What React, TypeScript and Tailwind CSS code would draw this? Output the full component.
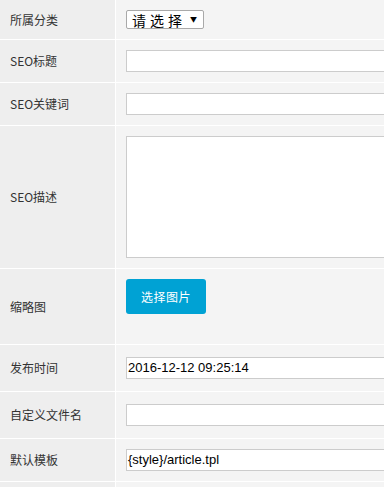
import React from "react";

const font = { fontFamily: '"Noto Sans CJK SC", "Noto Sans", sans-serif' };

function Row({
  label,
  h,
  children,
}: {
  label: string;
  h: string;
  children?: React.ReactNode;
}) {
  return (
    <div className={`flex border-b border-white ${h}`}>
      <div className="w-[116px] shrink-0 bg-[#eeeeee] border-r border-white flex items-center pl-[10px] text-[12px] text-[#333333]">
        {label}
      </div>
      <div className="flex-1 bg-[#f4f4f4] pl-[10px] flex items-center overflow-hidden">
        {children}
      </div>
    </div>
  );
}

function TextInput({ value }: { value?: string }) {
  return (
    <div
      className="h-[22px] w-[300px] shrink-0 bg-white border border-[#cccccc] pl-[1px] flex items-center text-[13px] text-black"
      style={{ fontFamily: '"Liberation Sans", Arial, sans-serif' }}
    >
      {value}
    </div>
  );
}

export default function App() {
  return (
    <div className="w-[384px] h-[487px] overflow-hidden bg-[#f4f4f4]" style={font}>
      <Row label="所属分类" h="h-[40px]">
        <div className="h-[19px] w-[78px] bg-white border border-[#a9a9a9] rounded-[2px] flex items-center justify-between pl-[5px] pr-[6px]">
          <span className="text-[14px] leading-none tracking-[4px] text-black">请选择</span>
          <span className="text-[7px] leading-none text-black">▼</span>
        </div>
      </Row>
      <Row label="SEO标题" h="h-[43px]">
        <TextInput />
      </Row>
      <Row label="SEO关键词" h="h-[43px]">
        <TextInput />
      </Row>
      <Row label="SEO描述" h="h-[143px]">
        <div className="h-[122px] w-[300px] shrink-0 bg-white border border-[#cccccc]" />
      </Row>
      <Row label="缩略图" h="h-[76px]">
        <div className="self-start mt-[10px] h-[35px] w-[80px] rounded-[3px] bg-[#00a2d4] text-white text-[12px] flex items-center justify-center tracking-[0.5px]">
          选择图片
        </div>
      </Row>
      <Row label="发布时间" h="h-[47px]">
        <TextInput value="2016-12-12 09:25:14" />
      </Row>
      <Row label="自定义文件名" h="h-[47px]">
        <TextInput />
      </Row>
      <Row label="默认模板" h="h-[43px]">
        <TextInput value="{style}/article.tpl" />
      </Row>
      <Row label="" h="h-[40px]" />
    </div>
  );
}
